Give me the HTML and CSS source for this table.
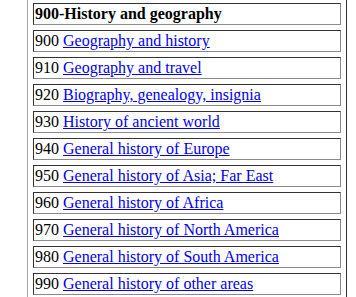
FILE: index.html
```html
<!DOCTYPE html>
<html>
<head>
<meta charset="utf-8">
<link rel="stylesheet" href="styles.css">
</head>
<body>
<table class="ddc">
<tr><td class="head">900-History and geography</td></tr>
<tr><td>900 <a href="#">Geography and history</a></td></tr>
<tr><td>910 <a href="#">Geography and travel</a></td></tr>
<tr><td>920 <a href="#">Biography, genealogy, insignia</a></td></tr>
<tr><td>930 <a href="#">History of ancient world</a></td></tr>
<tr><td>940 <a href="#">General history of Europe</a></td></tr>
<tr><td>950 <a href="#">General history of Asia; Far East</a></td></tr>
<tr><td>960 <a href="#">General history of Africa</a></td></tr>
<tr><td>970 <a href="#">General history of North America</a></td></tr>
<tr><td>980 <a href="#">General history of South America</a></td></tr>
<tr><td>990 <a href="#">General history of other areas</a></td></tr>
</table>
</body>
</html>
```

FILE: styles.css
```css
html, body {
  margin: 0;
  padding: 0;
  background: #ffffff;
}
body {
  font-family: "Liberation Serif", "Times New Roman", serif;
  font-size: 16px;
  color: #000;
}
.ddc {
  margin: -3px 0 0 27px;
  width: 320px;
  border-collapse: separate;
  border-spacing: 5px;
  border-style: solid;
  border-width: 1px;
  border-color: #a6a6a6 #333333 #333333 #a6a6a6;
}
.ddc td {
  padding: 1px;
  height: 18px;
  line-height: 18px;
  border-style: solid;
  border-width: 1px;
  border-color: #333333 #8a8a8a #8a8a8a #333333;
  white-space: nowrap;
}
.ddc td.head {
  font-weight: bold;
}
.ddc a {
  color: #0000ee;
  text-decoration: underline;
}
```
